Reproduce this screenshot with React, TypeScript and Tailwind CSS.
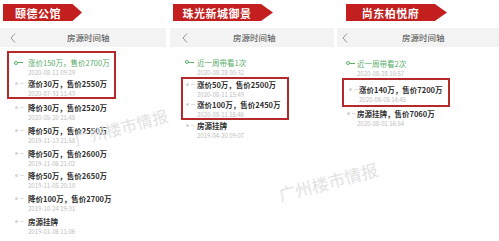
import React from "react";

type Row = { text: string; date: string; green?: boolean };

const font = { fontFamily: '"Noto Sans CJK SC", "Noto Sans", sans-serif' };

// the browser holds text at 12px minimum, so small text is drawn at 2x and scaled down
function Small({ box, inner, children }: { box: string; inner: string; children: React.ReactNode }) {
  return (
    <div className={"flex items-start " + box}>
      <span className={"block shrink-0 origin-top-left scale-50 whitespace-nowrap " + inner}>{children}</span>
    </div>
  );
}

function Chevron() {
  return (
    <svg width="6" height="10" viewBox="0 0 6 10" className="shrink-0">
      <polyline points="5,0.5 1,5 5,9.5" fill="none" stroke="#8a8a8a" strokeWidth="0.9" />
    </svg>
  );
}

function Tag({ label, width, left }: { label: string; width: number; left: number }) {
  return (
    <div
      className="h-[17px] flex items-center bg-[#c21f1e] [clip-path:polygon(0_0,88%_0,100%_50%,88%_100%,0_100%)]"
      style={{ width, marginLeft: left }}
    >
      <div className="w-[88%] h-full flex items-center justify-center">
        <span className="block shrink-0 scale-50 whitespace-nowrap text-white font-bold text-[22px] leading-[34px] tracking-[1px]">
          {label}
        </span>
      </div>
    </div>
  );
}

function Header({ chevron, title }: { chevron: number; title: number }) {
  return (
    <div className="mt-[7px] h-[19px] bg-[#f3f3f3] flex items-center">
      <div style={{ marginLeft: chevron }}>
        <Chevron />
      </div>
      <div style={{ marginLeft: title - chevron - 6 }}>
        <Small box="h-[11px]" inner="text-[17px] leading-[22px] text-[#444]">
          房源时间轴
        </Small>
      </div>
    </div>
  );
}

function Item({ row, icon, text }: { row: Row; icon: number; text: number }) {
  return (
    <div className="flex h-[19px]" style={{ paddingLeft: icon }}>
      <div className="flex items-center h-[11px] shrink-0" style={{ width: text - icon }}>
        {row.green ? (
          <>
            <span className="w-[4px] h-[4px] rounded-full border border-[#5cae6a]" />
            <span className="w-[5px] h-px bg-[#5cae6a]" />
          </>
        ) : (
          <>
            <span className="ml-[1px] w-[3px] h-[3px] rounded-full bg-[#d4d4d4]" />
            <span className="ml-[2px] w-[4px] h-px bg-[#e0e0e0]" />
          </>
        )}
      </div>
      <div className="flex flex-col">
        <Small
          box="h-[11px]"
          inner={
            "text-[15px] leading-[22px] " + (row.green ? "text-[#58ac66]" : "text-[#2e2e2e] font-bold")
          }
        >
          {row.text}
        </Small>
        <Small box="h-[8px]" inner="text-[12px] leading-[16px] text-[#bdbdbd]">
          {row.date}
        </Small>
      </div>
    </div>
  );
}

export default function App() {
  const p1: Row[] = [
    { text: "涨价150万，售价2700万", date: "2020-08-11 09:29", green: true },
    { text: "涨价30万，售价2550万", date: "2020-07-31 11:43" },
    { text: "降价30万，售价2520万", date: "2020-05-20 21:48" },
    { text: "降价50万，售价2550万", date: "2019-11-13 21:58" },
    { text: "降价50万，售价2600万", date: "2019-11-06 21:02" },
    { text: "降价50万，售价2650万", date: "2019-11-05 20:10" },
    { text: "降价100万，售价2700万", date: "2019-10-24 19:31" },
    { text: "房源挂牌", date: "2019-01-06 11:06" },
  ];
  const p2: Row[] = [
    { text: "近一周带看1次", date: "2020-08-28 00:32", green: true },
    { text: "涨价50万，售价2500万", date: "2020-08-11 15:49" },
    { text: "涨价100万，售价2450万", date: "2020-08-11 15:46" },
    { text: "房源挂牌", date: "2019-04-20 09:07" },
  ];
  const p3: Row[] = [
    { text: "近一周带看2次", date: "2020-08-28 10:57", green: true },
    { text: "涨价140万，售价7200万", date: "2020-08-05 14:45" },
    { text: "房源挂牌，售价7060万", date: "2020-08-01 16:54" },
  ];

  return (
    <div className="relative w-[499px] h-[241px] overflow-hidden bg-white flex" style={font}>
      {/* 颐德公馆 */}
      <div className="w-[166px] pt-[4px] shrink-0">
        <Tag label="颐德公馆" width={79} left={3} />
        <Header chevron={10} title={67} />
        <div className="mt-[4px] ml-[7px] w-[109px] border-2 border-[#b5292b] pt-[4px] flex flex-col gap-[2px]">
          <Item row={p1[0]} icon={5} text={19} />
          <Item row={p1[1]} icon={5} text={19} />
        </div>
        <div className="mt-[3px] flex flex-col gap-[3.8px]">
          {p1.slice(2).map((r) => (
            <Item key={r.date} row={r} icon={14} text={28} />
          ))}
        </div>
      </div>

      {/* 珠光新城御景 */}
      <div className="ml-[4px] w-[164px] pt-[4px] shrink-0">
        <Tag label="珠光新城御景" width={100} left={3} />
        <Header chevron={12} title={63} />
        <div className="mt-[9.5px]">
          <Item row={p2[0]} icon={15} text={27} />
        </div>
        <div className="mt-[1px] ml-[11px] w-[108px] border-2 border-[#b5292b] flex flex-col gap-[1px]">
          <Item row={p2[1]} icon={2} text={14} />
          <Item row={p2[2]} icon={2} text={14} />
        </div>
        <Item row={p2[3]} icon={15} text={27} />
      </div>

      {/* 尚东柏悦府 */}
      <div className="ml-[3px] w-[162px] pt-[4px] shrink-0">
        <Tag label="尚东柏悦府" width={101} left={9} />
        <Header chevron={5} title={65} />
        <div className="mt-[10.5px]">
          <Item row={p3[0]} icon={9} text={20} />
        </div>
        <div className="mt-[1px] ml-[5px] w-[108px] border-2 border-[#b5292b] pt-[4px] pb-[2px]">
          <Item row={p3[1]} icon={4} text={15} />
        </div>
        <div className="mt-[1.5px]">
          <Item row={p3[2]} icon={9} text={20} />
        </div>
      </div>

      {/* watermarks */}
      <span className="absolute left-[73px] top-[119px] text-[16px] leading-none text-[#e2e2e2] whitespace-nowrap rotate-[-15deg]">
        广州楼市情报
      </span>
      <span className="absolute left-[277px] top-[173px] text-[17px] leading-none text-[#e2e2e2] whitespace-nowrap rotate-[-15deg]">
        广州楼市情报
      </span>
    </div>
  );
}
